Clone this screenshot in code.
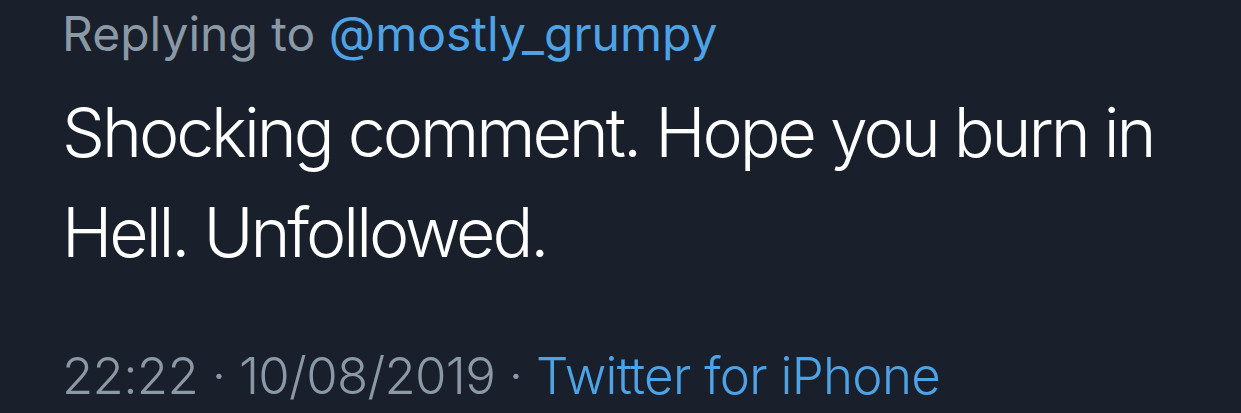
import React from "react";

export default function App() {
  return (
    <div
      className="w-[1241px] h-[413px] overflow-hidden bg-[#19202b] pl-[62px] whitespace-nowrap"
      style={{ fontFamily: "Inter, 'Liberation Sans', sans-serif" }}
    >
      <div className="text-[48px] leading-[68px] text-[#8b98a5]">
        Replying to <span className="text-[#4ea3e6]">@mostly_grumpy</span>
      </div>
      <p className="mt-[14px] text-[68px] leading-[100px] font-light tracking-[-0.045em] text-white">
        Shocking comment. Hope you burn in
        <br />
        Hell. Unfollowed.
      </p>
      <div className="mt-[64px] text-[51px] leading-[60px] font-light tracking-[-0.014em] text-[#8b98a5]">
        22:22 · 10/08/2019 ·{" "}
        <span className="text-[#4ea3e6]">Twitter for iPhone</span>
      </div>
    </div>
  );
}
